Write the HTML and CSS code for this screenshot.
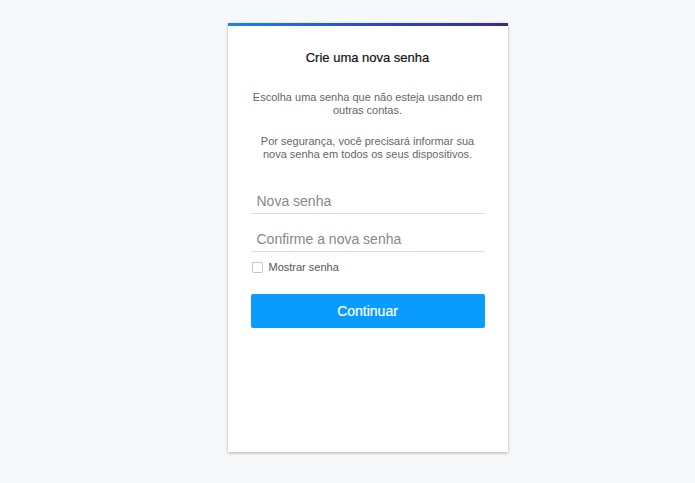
FILE: index.html
```html
<!DOCTYPE html>
<html lang="pt-BR">

<head>
    <meta charset="UTF-8">
    <meta name="viewport" content="width=device-width, initial-scale=1.0">
    <title>Crie uma nova senha</title>
    <link rel="stylesheet" href="styles.css">
</head>

<body>
    <div class="card">
        <h1 class="title">Crie uma nova senha</h1>
        <p class="info">Escolha uma senha que não esteja usando em outras contas.</p>
        <p class="info second">Por segurança, você precisará informar sua nova senha em todos os seus dispositivos.</p>

        <form class="form">
            <input type="password" class="field" placeholder="Nova senha">
            <input type="password" class="field" placeholder="Confirme a nova senha">
            <label class="show">
                <span class="box"></span>
                Mostrar senha
            </label>
            <button type="button" class="submit">Continuar</button>
        </form>
    </div>
</body>

</html>
```

FILE: styles.css
```css
body {
    margin: 0;
    padding: 23px 0 0 40px;
    background: #f7f8fa;
    font-family: "Liberation Sans", Arial, sans-serif;
    height: 100vh;
    box-sizing: border-box;
}

.card {
    width: 280px;
    height: 429px;
    margin: 0 auto;
    background: #fff;
    border-top: 3px solid #1b82e6;
    border-image: linear-gradient(to right, #1b86e8, #2a4fb5 50%, #3b2a8c) 1;
    box-shadow: 0 1px 3px rgba(0, 0, 0, 0.3);
    box-sizing: border-box;
    padding: 24px 23px 0;
    text-align: center;
}

.title {
    margin: 0;
    font-size: 13px;
    line-height: 16px;
    font-weight: normal;
    color: #111;
    -webkit-text-stroke: 0.2px #111;
}

.info {
    margin: 25px 0 0;
    font-size: 11px;
    line-height: 13px;
    color: #666;
}

.info.second {
    margin-top: 18px;
}

.form {
    margin-top: 15px;
    display: flex;
    flex-direction: column;
    text-align: left;
}

.field {
    height: 38px;
    border: none;
    border-bottom: 1px solid #dcdcdc;
    padding: 15px 6px 3px;
    font-family: inherit;
    font-size: 14px;
    color: #333;
    outline: none;
    box-sizing: border-box;
}

.field::placeholder {
    color: #888;
}

.show {
    margin-top: 8px;
    display: flex;
    align-items: center;
    gap: 6px;
    height: 14px;
    font-size: 11px;
    color: #555;
    cursor: pointer;
}

.box {
    width: 9px;
    height: 9px;
    border: 1px solid #c8c8c8;
    border-radius: 1px;
    margin-left: 1px;
}

.submit {
    margin-top: 20px;
    height: 34px;
    border: none;
    border-radius: 2px;
    background-color: #0a9bff;
    color: #fff;
    font-family: inherit;
    font-size: 14px;
    cursor: pointer;
    -webkit-text-stroke: 0.2px #fff;
}

.submit:hover {
    background-color: #008ae6;
}
```
